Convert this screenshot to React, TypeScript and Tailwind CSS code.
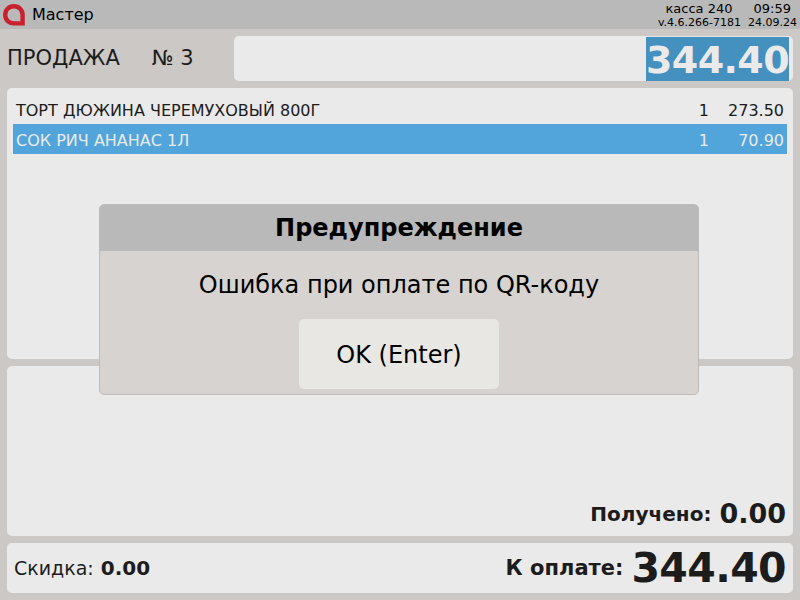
export default function App() {
  return (
    <div className="relative flex h-[600px] w-[800px] flex-col overflow-hidden bg-[#cbc8c5] font-['DejaVu_Sans',sans-serif] text-[#1c1c1c]">
      {/* Шапка */}
      <div className="flex h-[29px] items-center justify-between bg-[#b9b9b9] pl-[3px] pr-[3px]">
        <div className="flex items-center gap-[7px]">
          <svg width="22" height="22" viewBox="0 0 22 22">
            <path
              d="M11 2.2 C5.6 2.2 2.2 6 2.2 11 C2.2 16 6 19.4 11 19.4 L19.6 19.4 L19.6 11 C19.6 6 16 2.2 11 2.2 Z"
              fill="none"
              stroke="#c8202f"
              strokeWidth="4.4"
            />
          </svg>
          <span className="text-[16px] text-black">Мастер</span>
        </div>
        <div className="flex flex-col items-end pt-[1px] text-black">
          <div className="flex gap-[21px] pr-[6px] text-[13px] leading-[15px]">
            <span>касса 240</span>
            <span>09:59</span>
          </div>
          <div className="flex gap-[7px] text-[11px] leading-[13px]">
            <span>v.4.6.266-7181</span>
            <span>24.09.24</span>
          </div>
        </div>
      </div>

      <div className="flex flex-1 flex-col gap-[7px] px-[7px] pb-[7px] pt-[7px]">
        {/* Продажа и сумма */}
        <div className="flex h-[45px] items-center">
          <div className="flex w-[227px] gap-[32px] pt-[1px] text-[21px]">
            <span>ПРОДАЖА</span>
            <span>№ 3</span>
          </div>
          <div className="flex h-full flex-1 justify-end rounded-[5px] bg-[#eaeaea] pr-[4px] pt-[1px]">
            <div className="flex w-[143px] items-center justify-center bg-[#4490bf] pt-[2px] text-[38px] font-bold tracking-[-0.6px] text-[#eaeaea]">
              344.40
            </div>
          </div>
        </div>

        {/* Чек */}
        <div className="h-[271px] rounded-[5px] bg-[#eaeaea] px-[6px] pt-[6px] text-[16px]">
          <div className="flex h-[30px] items-center px-[3px] pt-[3px]">
            <span className="flex-1">ТОРТ ДЮЖИНА ЧЕРЕМУХОВЫЙ 800Г</span>
            <span>1</span>
            <span className="w-[75px] text-right">273.50</span>
          </div>
          <div className="flex h-[30px] items-center bg-[#52a5db] px-[3px] pt-[3px] text-[#eaeaea]">
            <span className="flex-1">СОК РИЧ АНАНАС 1Л</span>
            <span>1</span>
            <span className="w-[75px] text-right">70.90</span>
          </div>
        </div>

        {/* Получено */}
        <div className="flex h-[170px] items-end justify-end gap-[8px] rounded-[5px] bg-[#eaeaea] pb-[6px] pr-[7px]">
          <span className="text-[20px] font-bold leading-[32px]">Получено:</span>
          <span className="text-[27px] font-bold leading-[32px]">0.00</span>
        </div>

        {/* Итог */}
        <div className="flex h-[50px] items-center justify-between rounded-[5px] bg-[#eaeaea] px-[7px]">
          <div className="flex items-baseline gap-[7px] text-[19px]">
            <span>Скидка:</span>
            <span className="text-[20px] font-bold">0.00</span>
          </div>
          <div className="flex items-center gap-[8px]">
            <span className="pt-[1px] text-[21px] font-bold">К оплате:</span>
            <span className="text-[41px] font-bold leading-[50px] tracking-[-0.6px]">344.40</span>
          </div>
        </div>
      </div>

      {/* Диалог */}
      <div className="absolute left-[99px] top-[204px] flex h-[191px] w-[600px] flex-col overflow-hidden rounded-[5px] border border-[#bdbab7] bg-[#d6d3d0] text-black">
        <div className="flex h-[46px] items-center justify-center bg-[#b9b9b9] text-[24px] font-bold">
          Предупреждение
        </div>
        <div className="flex flex-1 flex-col items-center">
          <div className="mt-[19px] text-[24px] leading-[30px]">Ошибка при оплате по QR-коду</div>
          <button className="mt-[19px] flex h-[70px] w-[200px] items-center justify-center rounded-[5px] bg-[#e8e7e4] pt-[2px] text-[24px]">
            OK (Enter)
          </button>
        </div>
      </div>
    </div>
  );
}
